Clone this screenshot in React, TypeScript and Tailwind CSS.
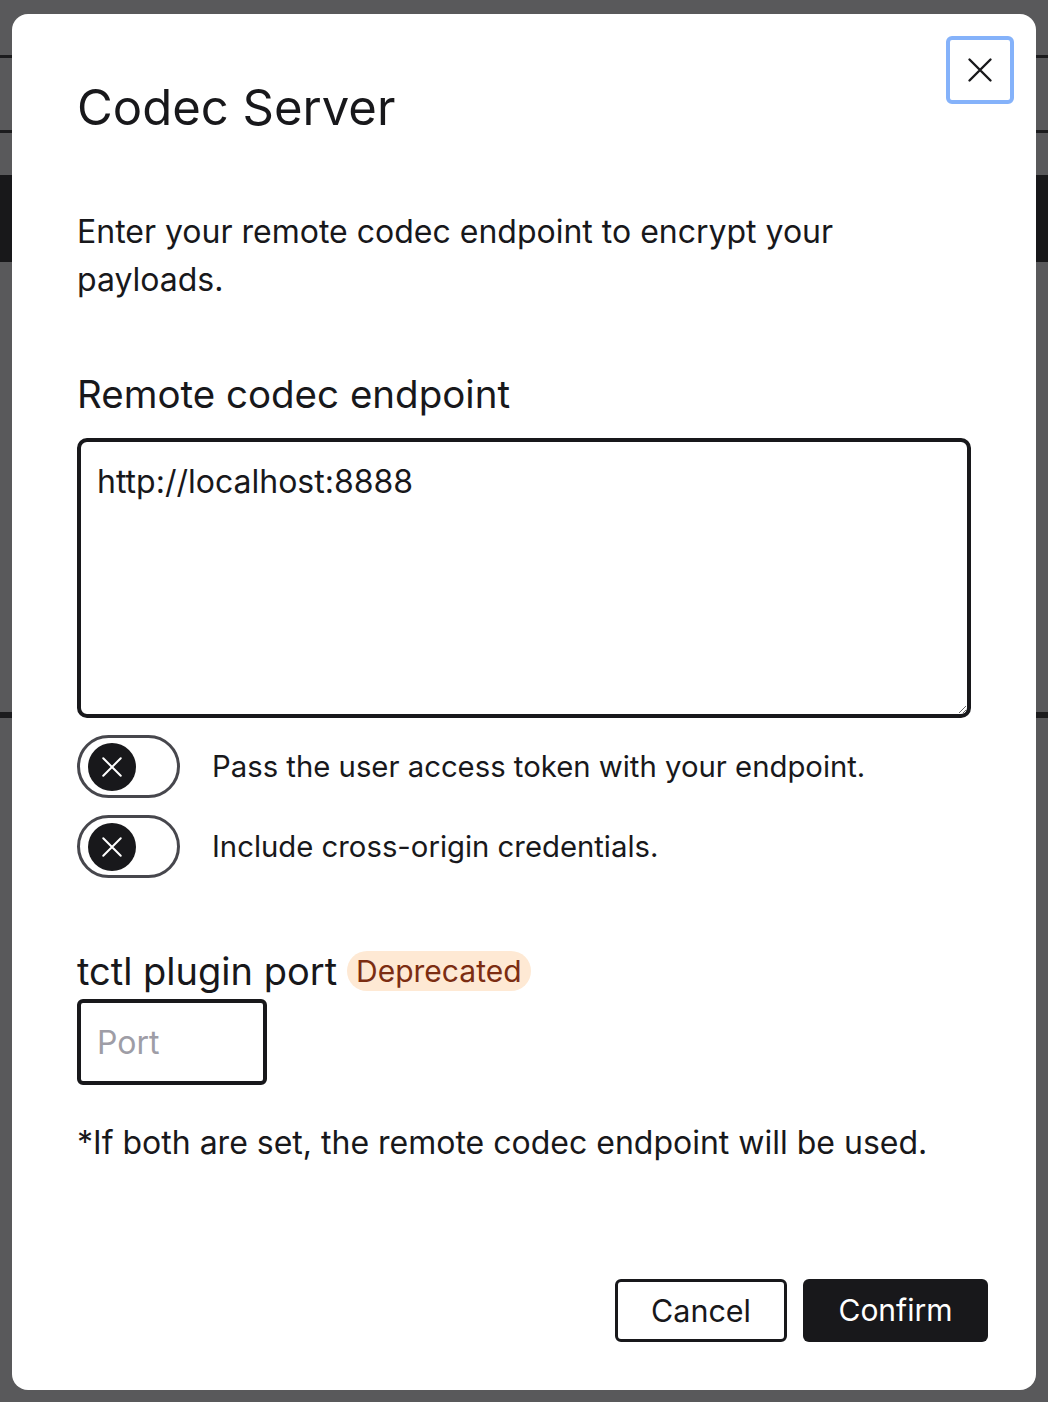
import React from "react";

function XIcon({ className }: { className?: string }) {
  return (
    <svg viewBox="0 0 24 24" fill="none" stroke="currentColor" strokeWidth={1.6} strokeLinecap="round" className={className}>
      <path d="M5 5 L19 19 M19 5 L5 19" />
    </svg>
  );
}

function Toggle({ label }: { label: string }) {
  return (
    <div className="flex items-center gap-[32px]">
      <div className="w-[103px] h-[63px] rounded-full border-[3.5px] border-[#47474d] bg-white flex items-center pl-[8px]">
        <div className="w-[48px] h-[48px] rounded-full bg-[#18181b] flex items-center justify-center text-white">
          <XIcon className="w-[30px] h-[30px]" />
        </div>
      </div>
      <span className="text-[29.3px] leading-[36px] text-[#18181b]">{label}</span>
    </div>
  );
}

export default function App() {
  return (
    <div className="relative w-[1048px] h-[1402px] overflow-hidden bg-[#59595b]" style={{ fontFamily: "Inter, 'Noto Sans', sans-serif" }}>
      {/* background page (behind overlay) */}
      <div className="flex flex-col">
        <div className="h-[55px]" />
        <div className="h-[3px] bg-[#1c1c1e]" />
        <div className="h-[72px]" />
        <div className="h-[3px] bg-[#1c1c1e]" />
        <div className="h-[42px]" />
        <div className="h-[87px] bg-[#18181a]" />
        <div className="h-[450px]" />
        <div className="h-[6px] bg-[#1c1c1e]" />
      </div>

      {/* modal */}
      <div className="absolute left-[12px] top-[14px] w-[1024px] h-[1376px] bg-white rounded-[16px] flex flex-col text-[#18181b]">
        <button className="absolute right-[22px] top-[22px] w-[68px] h-[68px] rounded-[6px] border-[4px] border-[#85b2fa] flex items-center justify-center text-[#18181b]">
          <XIcon className="w-[36px] h-[36px]" />
        </button>

        <div className="px-[65px] flex flex-col">
          <h1 className="mt-[66px] text-[49px] leading-[56px] font-normal">Codec Server</h1>
          <p className="mt-[72px] text-[32px] leading-[48px]">
            Enter your remote codec endpoint to encrypt your payloads.
          </p>
          <label className="mt-[68px] text-[38.5px] leading-[44px]">Remote codec endpoint</label>
          <textarea
            className="mt-[22px] h-[280px] w-full rounded-[10px] border-[4px] border-[#18181b] px-[16px] pt-[22px] text-[32px] leading-[36px] outline-none resize-y"
            defaultValue="http://localhost:8888"
          />
          <div className="mt-[17px] flex flex-col gap-[17px]">
            <Toggle label="Pass the user access token with your endpoint." />
            <Toggle label="Include cross-origin credentials." />
          </div>
          <div className="mt-[71px] flex items-center gap-[10px]">
            <span className="text-[38px] leading-[44px]">tctl plugin port</span>
            <span className="rounded-full bg-[#fee9d4] text-[#7c2d12] text-[30px] leading-[40px] px-[9px]">Deprecated</span>
          </div>
          <input
            className="mt-[6px] w-[190px] h-[86px] rounded-[6px] border-[4px] border-[#18181b] px-[16px] text-[32px] placeholder:text-[#9e9da6] outline-none"
            placeholder="Port"
          />
          <p className="mt-[38px] text-[32px] leading-[40px]">*If both are set, the remote codec endpoint will be used.</p>
        </div>

        <div className="mt-auto mb-[48px] px-[48px] flex justify-end gap-[16px]">
          <button className="w-[172px] h-[63px] rounded-[6px] border-[3px] border-[#18181b] bg-white text-[30.5px] text-[#18181b]">Cancel</button>
          <button className="w-[185px] h-[63px] rounded-[6px] bg-[#18181b] text-[30px] text-white">Confirm</button>
        </div>
      </div>
    </div>
  );
}
